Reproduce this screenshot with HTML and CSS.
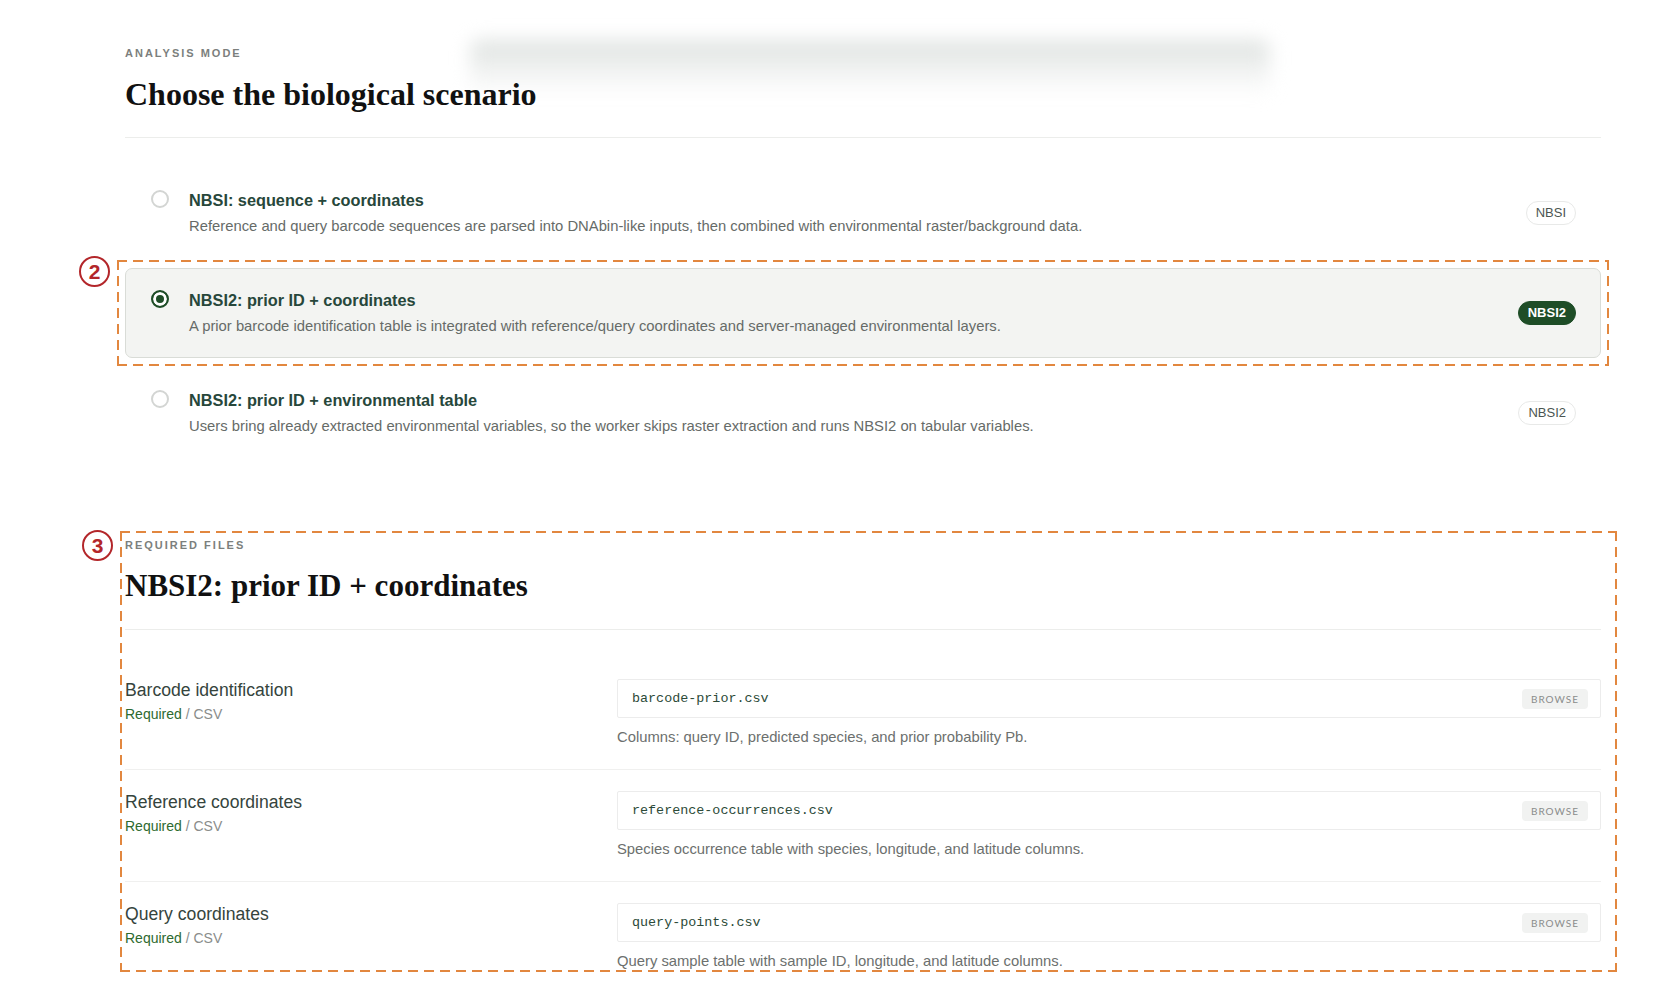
FILE: index.html
```html
<!DOCTYPE html>
<html lang="en">
<head>
  <meta charset="UTF-8">
  <meta name="viewport" content="width=device-width, initial-scale=1.0">
  <title>NBSI Workbench - New analysis</title>
  <link rel="stylesheet" href="styles.css">
</head>
<body>
  <div class="toolbar-shadow"></div>

  <main class="page">

    <!-- Step 2: pick the analysis mode -->
    <section class="panel">
      <header class="panel-head">
        <p class="eyebrow">Analysis mode</p>
        <h2 class="panel-title">Choose the biological scenario</h2>
      </header>

      <div class="options">
        <label class="option">
          <input type="radio" name="mode" value="nbsi">
          <span class="option-text">
            <span class="option-title">NBSI: sequence + coordinates</span>
            <span class="option-desc">Reference and query barcode sequences are parsed into DNAbin-like inputs, then combined with environmental raster/background data.</span>
          </span>
          <span class="badge">NBSI</span>
        </label>

        <label class="option selected">
          <input type="radio" name="mode" value="nbsi2-coords" checked>
          <span class="option-text">
            <span class="option-title">NBSI2: prior ID + coordinates</span>
            <span class="option-desc">A prior barcode identification table is integrated with reference/query coordinates and server-managed environmental layers.</span>
          </span>
          <span class="badge">NBSI2</span>
          <span class="marker marker-card"><span class="marker-num">2</span></span>
        </label>

        <label class="option">
          <input type="radio" name="mode" value="nbsi2-env">
          <span class="option-text">
            <span class="option-title">NBSI2: prior ID + environmental table</span>
            <span class="option-desc">Users bring already extracted environmental variables, so the worker skips raster extraction and runs NBSI2 on tabular variables.</span>
          </span>
          <span class="badge">NBSI2</span>
        </label>
      </div>
    </section>

    <!-- Step 3: upload the files the chosen mode needs -->
    <section class="panel files-panel">
      <span class="marker marker-files"><span class="marker-num">3</span></span>
      <header class="panel-head">
        <p class="eyebrow">Required files</p>
        <h2 class="panel-title title-sm">NBSI2: prior ID + coordinates</h2>
      </header>

      <div class="file-list">
        <div class="file-row">
          <div class="file-label">
            <div class="file-name">Barcode identification</div>
            <div class="file-meta"><span class="req">Required</span> / CSV</div>
          </div>
          <div class="file-field">
            <div class="file-input">
              <span class="file-value">barcode-prior.csv</span>
              <button class="browse" type="button">Browse</button>
            </div>
            <p class="file-help">Columns: query ID, predicted species, and prior probability Pb.</p>
          </div>
        </div>

        <div class="file-row">
          <div class="file-label">
            <div class="file-name">Reference coordinates</div>
            <div class="file-meta"><span class="req">Required</span> / CSV</div>
          </div>
          <div class="file-field">
            <div class="file-input">
              <span class="file-value">reference-occurrences.csv</span>
              <button class="browse" type="button">Browse</button>
            </div>
            <p class="file-help">Species occurrence table with species, longitude, and latitude columns.</p>
          </div>
        </div>

        <div class="file-row">
          <div class="file-label">
            <div class="file-name">Query coordinates</div>
            <div class="file-meta"><span class="req">Required</span> / CSV</div>
          </div>
          <div class="file-field">
            <div class="file-input">
              <span class="file-value">query-points.csv</span>
              <button class="browse" type="button">Browse</button>
            </div>
            <p class="file-help">Query sample table with sample ID, longitude, and latitude columns.</p>
          </div>
        </div>
      </div>
    </section>

  </main>
</body>
</html>
```

FILE: styles.css
```css
body {
  margin: 0;
  background-color: #ffffff;
  font-family: "Liberation Sans", Arial, sans-serif;
  color: #2f3b35;
  overflow: hidden;
}
.toolbar-shadow {
  position: absolute;
  top: 40px;
  left: 470px;
  width: 800px;
  height: 56px;
  border-radius: 10px;
  background: linear-gradient(#dde1df, #eef0ef 45%, rgba(255, 255, 255, 0));
  filter: blur(9px);
}
.page {
  position: relative;
  width: 1476px;
  margin: 0 0 0 125px;
  padding-top: 46px;
}
.panel {
  position: relative;
}
.panel-head {
  padding-bottom: 25px;
  border-bottom: 1px solid #ecedeb;
}
.eyebrow {
  margin: 0;
  font-size: 11px;
  line-height: 14px;
  font-weight: bold;
  letter-spacing: 2px;
  text-transform: uppercase;
  color: #7c7f7d;
}
.panel-title {
  position: relative;
  margin: 16px 0 0;
  font-family: "Liberation Serif", "Times New Roman", serif;
  font-size: 32px;
  line-height: 36px;
  font-weight: bold;
  color: #111111;
}
.title-sm {
  font-size: 31px;
}

/* mode options */
.options {
  display: flex;
  flex-direction: column;
  gap: 10px;
  margin-top: 30px;
}
.option {
  position: relative;
  display: flex;
  align-items: center;
  gap: 20px;
  height: 90px;
  box-sizing: border-box;
  padding: 0 24px 2px 25px;
  border: 1px solid transparent;
  border-radius: 7px;
  cursor: pointer;
}
.option.selected {
  background-color: #f3f4f2;
  border-color: #d9dcd7;
}
.option input {
  appearance: none;
  flex: none;
  align-self: flex-start;
  width: 18px;
  height: 18px;
  margin: 21px 0 0;
  border: 2px solid #d3d5d3;
  border-radius: 50%;
  background-color: #fff;
}
.option input:checked {
  border-color: #1e4d27;
  background-color: #1e4d27;
  box-shadow: inset 0 0 0 3px #fff;
}
.option-text {
  flex: 1;
  display: flex;
  flex-direction: column;
  gap: 5px;
}
.option-title {
  font-size: 16.3px;
  line-height: 22px;
  font-weight: bold;
  color: #27473b;
}
.option-desc {
  font-size: 14.8px;
  line-height: 20px;
  color: #666b68;
}
.badge {
  flex: none;
  margin-top: 2px;
  padding: 3px 9px;
  border: 1px solid #e8e9e8;
  border-radius: 12px;
  font-size: 13px;
  line-height: 16px;
  color: #4b5551;
  background-color: #fff;
}
.option.selected .badge {
  background-color: #1e4d27;
  border-color: #1e4d27;
  color: #fff;
  font-weight: bold;
}

/* review markers drawn over the form */
.marker {
  position: absolute;
  pointer-events: none;
  background:
    repeating-linear-gradient(90deg, #e2873f 0 10px, transparent 10px 16px) top / 100% 2px no-repeat,
    repeating-linear-gradient(90deg, #e2873f 0 10px, transparent 10px 16px) bottom / 100% 2px no-repeat,
    repeating-linear-gradient(180deg, #e2873f 0 10px, transparent 10px 16px) left / 2px 100% no-repeat,
    repeating-linear-gradient(180deg, #e2873f 0 10px, transparent 10px 16px) right / 2px 100% no-repeat;
}
.marker-num {
  position: absolute;
  width: 27px;
  height: 27px;
  border: 2px solid #b3262a;
  border-radius: 50%;
  background-color: #fff;
  font-size: 21px;
  line-height: 27px;
  font-weight: bold;
  text-align: center;
  color: #b3262a;
}
.marker-card {
  top: -9px;
  left: -9px;
  right: -9px;
  bottom: -9px;
}
.marker-card .marker-num {
  top: -4px;
  left: -38px;
}
.marker-files {
  top: -7px;
  left: -5px;
  right: -16px;
  bottom: 21px;
}
.marker-files .marker-num {
  top: -1px;
  left: -38px;
}

/* required files */
.files-panel {
  margin-top: 80px;
}
.file-list {
  margin-top: 28px;
}
.file-row {
  display: grid;
  grid-template-columns: 1fr 2fr;
  padding: 21px 0 23px;
  border-bottom: 1px solid #f0f0ef;
}
.file-row:last-child {
  border-bottom: none;
}
.file-name {
  font-size: 17.6px;
  line-height: 22px;
  color: #35443d;
}
.file-meta {
  margin-top: 3px;
  font-size: 14px;
  line-height: 20px;
  color: #8a8d8b;
}
.req {
  color: #2d6a2f;
}
.file-input {
  display: flex;
  align-items: center;
  justify-content: space-between;
  height: 39px;
  box-sizing: border-box;
  padding: 0 12px 0 14px;
  border: 1px solid #ececec;
  border-radius: 2px;
}
.file-value {
  font-family: "Liberation Mono", "Courier New", monospace;
  font-size: 13.4px;
  color: #2c4a38;
}
.browse {
  padding: 4px 9px;
  border: none;
  border-radius: 4px;
  background-color: #f1f2f1;
  font-family: "Lato", sans-serif;
  font-size: 10px;
  letter-spacing: 1px;
  text-transform: uppercase;
  color: #8a8c8b;
}
.file-help {
  margin: 10px 0 0;
  font-size: 14.8px;
  line-height: 18px;
  color: #6c706e;
}
```
